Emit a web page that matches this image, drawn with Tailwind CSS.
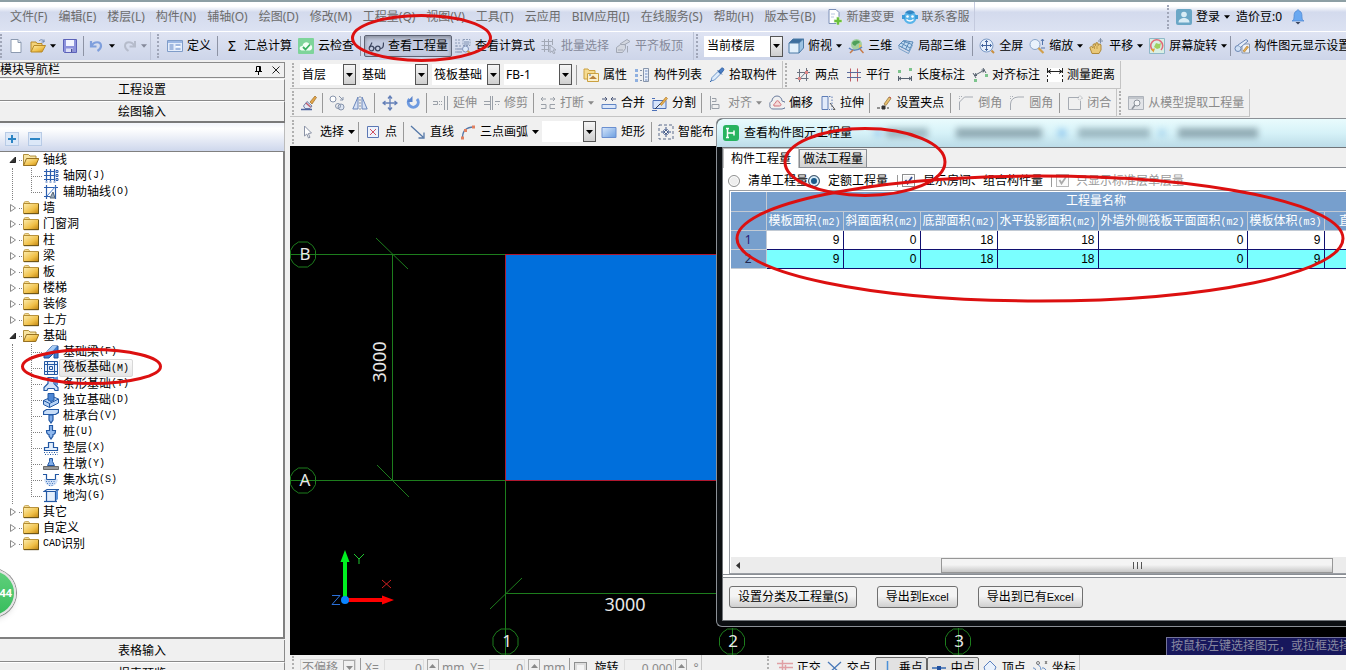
<!DOCTYPE html>
<html lang="zh-CN">
<head>
<meta charset="utf-8">
<title>查看构件图元工程量</title>
<script src="https://cdn.jsdelivr.net/npm/@tailwindcss/browser@4"></script>
</head>
<body class="relative flex h-screen flex-col overflow-hidden bg-[#f0f0f0] font-['Noto_Sans','Noto_Sans_CJK_SC',sans-serif] text-[12px] leading-4 whitespace-nowrap text-black">

<svg class="absolute size-0" aria-hidden="true">
  <defs>
    <linearGradient id="gold" x1="0" y1="0" x2="1" y2="1"><stop offset="0" stop-color="#fdeeb0"/><stop offset=".6" stop-color="#f0c048"/><stop offset="1" stop-color="#c08410"/></linearGradient>
    <linearGradient id="blu" x1="0" y1="0" x2="1" y2="1"><stop offset="0" stop-color="#d6e6fb"/><stop offset="1" stop-color="#6c9fe0"/></linearGradient>
  </defs>
  <symbol id="dn" viewBox="0 0 7 4"><path d="M0 0h7L3.500 4z" fill="currentColor"/></symbol>
  <symbol id="new" viewBox="0 0 16 16"><path d="M3 1.500h7l3 3v10H3z" fill="#fff" stroke="#8c9ab0"/><path d="M10 1.500v3h3" fill="#dfe6f0" stroke="#8c9ab0"/></symbol>
  <symbol id="open" viewBox="0 0 16 16"><path d="M1 14V4h5l1 1.500h5V8" fill="#f3d37a" stroke="#b88a28"/><path d="M1 14l3-6.500h11.500L12 14z" fill="url(#gold)" stroke="#b88a28"/><path d="M9 3c2-2 4-1.500 5 1m0-2.500V4h-2.500" fill="none" stroke="#6d86b0"/></symbol>
  <symbol id="save" viewBox="0 0 16 16"><path d="M1.500 1.500h13v13h-12l-1-1z" fill="#8d93dc" stroke="#5c62b8"/><path d="M4 2h8v6H4z" fill="#f2f4ff"/><path d="M4 10.500h7V14H4z" fill="#dcdff6"/><path d="M9 11h1.500v3H9z" fill="#4a4f9a"/></symbol>
  <symbol id="undo" viewBox="0 0 16 16"><path d="M2 3v5.500h5.500M2.500 8C5 3 12 3 12 8c0 2.500-2 4-3.500 5" fill="none" stroke="#7f9fdc" stroke-width="2.200"/></symbol>
  <symbol id="redo" viewBox="0 0 16 16"><path d="M14 3v5.500H8.500M13.500 8C11 3 4 3 4 8c0 2.500 2 4 3.500 5" fill="none" stroke="#b6bccb" stroke-width="2"/></symbol>
  <symbol id="define" viewBox="0 0 16 16"><path d="M.5 2.500h15v11H.5z" fill="#e4edfb" stroke="#7f9cc8"/><path d="M1 3h14v2H1z" fill="#9db8e4"/><path d="M2.500 7h4M2.500 9h4M2.500 11h4M8.500 7h5M8.500 11h5" stroke="#5f84c4"/><path d="M9 8.500h4" stroke="#fff"/></symbol>
  <symbol id="cloudchk" viewBox="0 0 16 16"><rect width="16" height="16" rx="1" fill="#7ed49a"/><path d="M3.500 12.500c-3-1-2-5 1-4.500C5 4 10 3 11.500 6.500c3.500 0 3.500 5.500.5 6z" fill="#f2fff5"/><path d="M5 9l2.500 2.500L12 6.500" fill="none" stroke="#38b060" stroke-width="1.800"/></symbol>
  <symbol id="glasses" viewBox="0 0 16 16"><g fill="none" stroke="#3d4660" stroke-width="1.200"><circle cx="3.500" cy="10.500" r="2.300"/><circle cx="9.800" cy="10.500" r="2.300"/><path d="M5.800 10h1.700M1.500 9.500L4 4.500M12 10.500c3 0 3.500-1.500 3.500-6"/></g></symbol>
  <symbol id="calcview" viewBox="0 0 16 16"><path d="M1 1v14M4 1v6M1 8h6M8 1.500h7v6H8z" stroke="#8d9cb8" stroke-dasharray="2 1" fill="#d9e2f3"/><path d="M9 4h5M9 6h5M2 11h5M2 14h5" stroke="#7b8cae"/><circle cx="10.500" cy="11" r="3" fill="#dbe8fa" stroke="#8092b8"/><path d="M12.500 13l3 2.500" stroke="#d89a3c" stroke-width="2"/></symbol>
  <symbol id="batch" viewBox="0 0 16 16"><path d="M.5 3.500h11M.5 7.500h9M.5 11.500h8M3.500 1v13M7.500 1v13M11.500 1v6M9 7l6 5h-3l2 3-1.500.7L11 13l-2 1.500z" fill="none" stroke="#a2a8b5"/></symbol>
  <symbol id="flush" viewBox="0 0 16 16"><path d="M1.500 14.500v-5l4-3h5v4l-3 4zM5 6l7-4.500 3 2L9 7" fill="#d3d7e0" stroke="#a2a8b5"/><path d="M3 12h5M12.500 8v6.500" stroke="#a2a8b5"/></symbol>
  <symbol id="cube" viewBox="0 0 16 16"><path d="M1 5l4-4h10.500L11 5z" fill="#3d6f9e"/><path d="M11 5l4.500-4v9L11 15z" fill="#9cc3e4"/><path d="M1 5h10v10H1z" fill="#e2f0fb"/><path d="M1 5h10v10H1zM1 5l4-4h10.500v9L11 15M11 5l4.500-4" fill="none" stroke="#4b7aa6"/></symbol>
  <symbol id="tri3" viewBox="0 0 16 16"><circle cx="8.500" cy="6.500" r="5.500" fill="#a4cfa0"/><path d="M4 5c2-3 6-3 8-1-1 2-3 1-4 3s-3 0-4-2z" fill="#4fa05a"/><path d="M11 6l3 2-3 3z" fill="#e5c050"/><path d="M1 10c3 3 9 3 13-1" stroke="#5d86c0" fill="none" stroke-width="1.500"/><path d="M12 11l3.500 4M2 15l3-3" stroke="#c87a48" stroke-width="1.500"/></symbol>
  <symbol id="loc3" viewBox="0 0 16 16"><path d="M.5 7.500l5-5 9.500 1.500-4 9z" fill="#c3dcf2" stroke="#5a89b8"/><path d="M3.500 9.500l4.500-7M7.500 11.500l4-8M3 5l9 5M5 3l9 3.500" stroke="#5a89b8" fill="none"/><path d="M1 8v2.500l9.500 5L14.500 7" fill="none" stroke="#7aa2c8"/></symbol>
  <symbol id="full" viewBox="0 0 16 16"><circle cx="7.500" cy="7.500" r="6.500" fill="#e6f0fc" stroke="#7d9bc6"/><path d="M7.500 2.500v10M2.500 7.500h10M6 4l1.500-1.500L9 4M6 11l1.500 1.500L9 11M4 6L2.500 7.500 4 9M11 6l1.500 1.500L11 9" fill="none" stroke="#40629c"/><path d="M12.500 12.500L15 15" stroke="#c98e3c" stroke-width="2"/></symbol>
  <symbol id="zoom" viewBox="0 0 16 16"><circle cx="6" cy="6.500" r="5" fill="#e9f2fc" stroke="#8aa6ca"/><path d="M9.500 10l5 5" stroke="#d2a04c" stroke-width="2.200"/><path d="M13.500 1v6M12 3l1.500-2L15 3M12 10h4" stroke="#5576ac" fill="none"/></symbol>
  <symbol id="hand" viewBox="0 0 16 16"><path d="M3 15.500L.8 9.500l1.700-1.200L4 10V6.500l1.800-.8.7 2 .5-3 2 .3.200 2.500 1-1.500 1.800.8V12L10 15.500z" fill="#e9c878" stroke="#b08a3a"/><path d="M5.500 8v3M8 8v3" stroke="#b08a3a" stroke-width=".7"/><path d="M11.500.500v5M9 3h5M10.500 1.500l1-1 1 1" stroke="#8090a8" fill="none"/></symbol>
  <symbol id="rot" viewBox="0 0 16 16"><path d="M.5.5h15v15H.5z" fill="#d9efe4" stroke="#8fb8c8"/><path d="M4 12.500A6 6 0 1 1 12 12" fill="none" stroke="#e06a78" stroke-width="1.600"/><path d="M5 9l2-4 3 1 2-1-1 5-3 1z" fill="#9ed060"/><path d="M2 11l4-.5-1.500 4z" fill="#e0a030"/></symbol>
  <symbol id="disp" viewBox="0 0 16 16"><path d="M8 6h7.500v9H8z" fill="#eef2f8" stroke="#8795ab"/><circle cx="4" cy="10.500" r="3" fill="#cfe0f5" stroke="#6b87b4"/><path d="M4 7l8-5.500 2 1.500-7 6" fill="#e6eef9" stroke="#6b87b4"/><path d="M9 13l4-5 1.500 1-4 5z" fill="#e8b050" stroke="#a87428" stroke-width=".6"/></symbol>
  <symbol id="prop" viewBox="0 0 16 16"><path d="M1 3.500V2h4l1 1.500h6V12H1z" fill="#f6dc92" stroke="#caa040"/><path d="M4.500 6.500h11v8h-11z" fill="#fbf0cd" stroke="#caa040"/><path d="M6 12l4-3.500 4 3.500z" fill="#b8823c"/><path d="M6 8h2" stroke="#5577b4"/></symbol>
  <symbol id="list" viewBox="0 0 16 16"><path d="M1 2h3v3H1zM1 7h3v3H1zM1 12h3v3H1z" fill="#8fb0e0"/><path d="M6 3.500h2M6 8.500h2M6 13.500h2" stroke="#8492a8"/><path d="M9.500 1.500h5v13h-5z" fill="#e9eff9" stroke="#8795ab"/><path d="M11 4h2.500M11 7h2.500M11 10h2.500M11 13h2.500" stroke="#6f8cc0"/></symbol>
  <symbol id="pick" viewBox="0 0 16 16"><path d="M2 14l1-3.500 6-6 2.500 2.500-6 6z" fill="#dcebfb" stroke="#6d95c8"/><path d="M8.500 3l4.500 4.500M9.500 4.500L12 1.500c2-1.500 3.500.5 2.500 2L12 6.500z" fill="#4a7ec4" stroke="#3565a8"/><path d="M1 15l1.500-1.500" stroke="#3565a8"/></symbol>
  <symbol id="twopt" viewBox="0 0 16 16"><path d="M4.500 2v13M.5 11.500h13M11.500 1v13M2 5.500h13" stroke="#6b7280" fill="none"/><path d="M3.500 13L13 3" stroke="#6b7280"/><path d="M3 10h3v3H3zM10 4h3v3h-3z" fill="#e08a8a"/></symbol>
  <symbol id="para" viewBox="0 0 16 16"><path d="M4.500 1.500v13M11.500 1.500v13" stroke="#c05a64"/><path d="M1 5.500h14M1 10.500h14" stroke="#5b6c9c"/></symbol>
  <symbol id="dimlen" viewBox="0 0 16 16"><path d="M1 3h3v3H1zM12 1h3v3h-3z" fill="#7cc48c"/><path d="M1.500 9v5M14.500 9v5M2 11.500h12M4 10l-2 1.500L4 13M12 10l2 1.500-2 1.500" stroke="#55606e" fill="none"/></symbol>
  <symbol id="dimali" viewBox="0 0 16 16"><path d="M2 12h3v3H2zM13 7h3v3h-3z" fill="#7cc48c"/><path d="M1 6l3 5M11 1l3 5M2.500 8.500L12.500 3M5 8.500H2.500L4 6M9.500 3h3L11 5.500" stroke="#55606e" fill="none"/></symbol>
  <symbol id="measure" viewBox="0 0 16 16"><path d="M0 1h16v14H0z" fill="#fff"/><path d="M.5 1v5M15.500 1v5M.5 8v2M15.500 8v2M.5 12v3M15.500 12v3M1 4.500h14M4 2.500l-3 2 3 2M12 2.500l3 2-3 2" stroke="#222" fill="none"/></symbol>
  <symbol id="brush" viewBox="0 0 16 16"><path d="M9 7l5-6 1.500 1.500L11 9z" fill="#e3a64a" stroke="#9c6b26" stroke-width=".7"/><path d="M6 6.500l5 4.500-2 2.500H4L2.500 11z" fill="#e4e8f4" stroke="#6e7fa8"/><path d="M5 8l4.500 4" stroke="#c06070" stroke-width="1.500"/><path d="M0 14.500h11" stroke="#4e64a0" stroke-width="1.500"/></symbol>
  <symbol id="copy" viewBox="0 0 16 16"><circle cx="4" cy="4" r="3" fill="#fff" stroke="#8794ab"/><circle cx="12" cy="12" r="3" fill="#dce4f2" stroke="#8794ab"/><circle cx="9" cy="11" r="2.500" fill="none" stroke="#8794ab"/><path d="M10 1l4 4m0-3v3h-3" stroke="#8794ab" fill="none"/></symbol>
  <symbol id="mirror" viewBox="0 0 16 16"><path d="M6 2v12H.8zM10 2v12h5.200z" fill="#d5e0f4" stroke="#6a86bb"/><path d="M8 1v14" stroke="#8794ab" stroke-dasharray="2 1"/></symbol>
  <symbol id="move" viewBox="0 0 16 16"><path d="M8 1v14M1 8h14M6 3.500L8 1l2 2.500M6 12.500L8 15l2-2.500M3.500 6L1 8l2.500 2M12.500 6L15 8l-2.500 2" fill="none" stroke="#6480b8" stroke-width="1.300"/></symbol>
  <symbol id="rotate" viewBox="0 0 16 16"><path d="M4.500 4A5 5 0 1 0 12 4" fill="none" stroke="#6f9be0" stroke-width="3"/><path d="M7.500 1v6H2z" fill="#5a84cc"/></symbol>
  <symbol id="extend" viewBox="0 0 16 16"><path d="M0 6.500h4.500v3H0" fill="none" stroke="#9aa0a8"/><path d="M6 6.500h1M8 6.500h1M6 9.500h1M8 9.500h1M11.500 1v14M14.500 1v14" stroke="#9aa0a8"/></symbol>
  <symbol id="trim" viewBox="0 0 16 16"><path d="M0 6.500h6M0 9.500h6M8.500 1v14M6.500 1v14M11 6.500h5M11 9.500h1M14 9.500h1" stroke="#9aa0a8" fill="none"/></symbol>
  <symbol id="break" viewBox="0 0 16 16"><path d="M1 9.500h5v4H1M15 9.500h-5v4h5M6 4H1m2-2L1 4l2 2M10 4h5m-2-2l2 2-2 2" stroke="#9aa0a8" fill="none"/></symbol>
  <symbol id="merge" viewBox="0 0 16 16"><path d="M1 4h5M4 2l2 2-2 2M15 4h-5m2-2l-2 2 2 2" stroke="#4d5a7c" fill="none"/><path d="M1 9.500h14v4H1z" fill="#dbe7fa" stroke="#5f84c4"/></symbol>
  <symbol id="split" viewBox="0 0 16 16"><path d="M1 5.500h13v8H1z" fill="#d6e4fa" stroke="#4c70b8"/><path d="M3 14L13 4" stroke="#333b50"/><path d="M8 9l6-7 1.500 1.500-6 7z" fill="#e8b050" stroke="#a87428" stroke-width=".6"/><path d="M0 3.500h3M0 15.500h5" stroke="#4c70b8"/></symbol>
  <symbol id="align" viewBox="0 0 16 16"><path d="M2.500 1v14M4 3.500h4v3H4M4 9.500h7v4H4z" fill="none" stroke="#9aa0a8"/></symbol>
  <symbol id="offset" viewBox="0 0 16 16"><path d="M1 10a3 3 0 0 1 2-4 5 5 0 0 1 10 0 3.500 3.500 0 0 1 0 8H4a3 3 0 0 1-3-4z" fill="none" stroke="#6c7d9e"/><path d="M5 11c-1-2 1-2.500 1.500-3 .5-3 3.500-3 4 0 2 .5 2 3 0 3z" fill="#f6dada" stroke="#d07078"/></symbol>
  <symbol id="stretch" viewBox="0 0 16 16"><path d="M2 1.500h6v13H2z" fill="#e2ebfa" stroke="#5e7db6"/><path d="M9 1.500h3v13H9" stroke="#5e7db6" fill="none" stroke-dasharray="1.500 1.500"/><path d="M10 8l5 6.500-2-.2" stroke="#555" fill="none"/></symbol>
  <symbol id="gripi" viewBox="0 0 16 16"><path d="M1 13h3M6 11h3v3H6zM11 13h2" stroke="#333" fill="#333"/><path d="M8 9l5-7 2 1.500-5 7z" fill="#e8c070" stroke="#8a6a30" stroke-width=".7"/><path d="M13.500 2l1.500 1" stroke="#c44"/></symbol>
  <symbol id="chamfer" viewBox="0 0 16 16"><path d="M1.500 15V7l5-5H15" fill="none" stroke="#a6abb3"/><path d="M1.500 4V1.500H4" fill="none" stroke="#a6abb3" stroke-dasharray="1 1"/></symbol>
  <symbol id="fillet" viewBox="0 0 16 16"><path d="M1.500 15V9Q2 2.500 9 2H15" fill="none" stroke="#a6abb3"/><path d="M1.500 4V1.500H4" fill="none" stroke="#a6abb3" stroke-dasharray="1 1"/></symbol>
  <symbol id="closei" viewBox="0 0 16 16"><path d="M12 2.500H1.500v12h12V6" fill="none" stroke="#a6abb3"/><circle cx="13" cy="3" r="2" fill="none" stroke="#a6abb3" stroke-dasharray="1 1"/></symbol>
  <symbol id="extract" viewBox="0 0 16 16"><path d="M.5 1.500h15v13H.5z" fill="#e2e4e8" stroke="#adb2ba"/><path d="M1 2h14v2H1z" fill="#c2c6cc"/><circle cx="9" cy="8" r="3" fill="#f4f5f7" stroke="#8d939c"/><path d="M7 10l-3 4" stroke="#8d939c" stroke-width="1.500"/></symbol>
  <symbol id="cursor" viewBox="0 0 16 16"><path d="M4.500 2v10l2.300-2 1.700 4 1.500-.7-1.700-3.800 3.200-.5z" fill="#fff" stroke="#8b93a6"/></symbol>
  <symbol id="pointi" viewBox="0 0 16 16"><path d="M2.500 2.500h11v11h-11z" fill="#eef3fc" stroke="#5c78b4"/><path d="M5 5l6 6M11 5l-6 6" stroke="#d05060"/></symbol>
  <symbol id="linei" viewBox="0 0 16 16"><path d="M1 2l12 11M14 8.500V14H8.500" stroke="#5578a8" fill="none" stroke-width="1.300"/></symbol>
  <symbol id="arci" viewBox="0 0 16 16"><path d="M2.500 14C2.500 7 6 3 14 3" stroke="#5578a8" fill="none" stroke-width="1.300"/><path d="M1 12.500h3v3H1zM4 5h3v3H4zM12 1.500h3v3h-3z" fill="#e08060"/></symbol>
  <symbol id="recti" viewBox="0 0 16 16"><path d="M1 3.500h14v10H1z" fill="url(#blu)" stroke="#6a8fd0"/></symbol>
  <symbol id="smart" viewBox="0 0 16 16"><path d="M1 1h14v14H1z" fill="none" stroke="#5d6c8c" stroke-dasharray="3 2"/><path d="M8 3v4M8 9v4M3 8h4M9 8h4M6.500 5L8 7l1.500-2M6.500 11L8 9l1.500 2M5 6.500L7 8 5 9.500M11 6.500L9 8l2 1.500" fill="none" stroke="#3e5688"/></symbol>
  <symbol id="ortho" viewBox="0 0 16 16"><path d="M0 3.500h16M5.500 0v11M8.500 5v11M2 7.500h14" stroke="#e0a0a4" stroke-width="1.500"/></symbol>
  <symbol id="cross" viewBox="0 0 16 16"><path d="M1 2l13 12M14 2L1 14" stroke="#4878b8" stroke-width="1.300"/></symbol>
  <symbol id="perp" viewBox="0 0 16 16"><path d="M8.500 1v12M2 13.500h13" stroke="#4a90d8" stroke-width="1.500"/></symbol>
  <symbol id="mid" viewBox="0 0 16 16"><path d="M1 8h14" stroke="#3468b0" stroke-width="1.500"/><path d="M6 6h4v4H6z" fill="#2050a0"/></symbol>
  <symbol id="vertex" viewBox="0 0 16 16"><path d="M8 1l6 6-3 7H4L2 7z" fill="#e9f1fc" stroke="#5a80c0"/></symbol>
  <symbol id="coord" viewBox="0 0 16 16"><path d="M1 8q3-1 3 6M5 4q5 2 4 10M10 8q4-1 5 6" stroke="#6890c8" fill="none"/><circle cx="6" cy="3" r="1.500" fill="none" stroke="#777"/><path d="M13 1l2 3m0-3l-2 3" stroke="#777"/></symbol>
  <symbol id="user" viewBox="0 0 16 16"><rect width="16" height="16" rx="2" fill="#6ba7c6"/><circle cx="8" cy="5.500" r="2.800" fill="#d9ecf5"/><path d="M2.500 13.500c0-6 11-6 11 0z" fill="#d9ecf5"/></symbol>
  <symbol id="bell" viewBox="0 0 16 16"><path d="M8 .5l1 1.300c2.500.6 3 3 3 5.700s.5 3.500 2 4.500H2c1.500-1 2-1.800 2-4.500s.5-5.100 3-5.700z" fill="#6aa8f0" stroke="#4a84d0" stroke-width=".7"/><path d="M5.500 13h5L8 15.500z" fill="#3a4660"/></symbol>
  <symbol id="newdoc" viewBox="0 0 16 16"><path d="M2 .5h7l3 3v11H2z" fill="#fff" stroke="#7c90b8"/><path d="M4 5h4M4 8h3" stroke="#b8c6e0"/><path d="M9.500 8h3v2.500H15v3h-2.500V16h-3v-2.500H7v-3h2.500z" fill="#6cc03c" stroke="#e8f6e0" stroke-width=".6"/></symbol>
  <symbol id="robot" viewBox="0 0 16 16"><circle cx="8" cy="8.500" r="6.500" fill="#58b4ea"/><path d="M0 6h3v4H0zM13 6h3v4h-3z" fill="#3b9ad8"/><path d="M3 3.500Q8-1 13 3.500L8 5.500z" fill="#3286c4"/><circle cx="5.500" cy="7.500" r="1.300" fill="#fff"/><circle cx="10.500" cy="7.500" r="1.300" fill="#fff"/><path d="M4.500 10.500q3.500 3 7 0" stroke="#fff" fill="none" stroke-width="1.300"/></symbol>
  <symbol id="logo" viewBox="0 0 16 16"><rect width="16" height="16" rx="3" fill="#27b45f"/><path d="M4.500 3v10M4.500 8H11M3 3.500h3M3 12.500h3M11 5.500v5" stroke="#fff" stroke-width="1.500" fill="none"/></symbol>
  <symbol id="fold" viewBox="0 0 16 16"><path d="M1 3q0-1.500 1.500-1.500h3L7 3.500H1z" fill="#f4dc94" stroke="#b89238" stroke-width=".7"/><path d="M.5 3.500h15v10H.5z" fill="url(#gold)" stroke="#a87c1c" stroke-width=".8"/><path d="M1 13.700h14.700V4" stroke="#4a3808" fill="none" stroke-width=".8"/></symbol>
  <symbol id="foldo" viewBox="0 0 16 16"><path d="M.5 13.500v-11h5L7 4h6v3" fill="#f7e4a2" stroke="#a8842c" stroke-width=".9"/><path d="M.5 13.500l3-7h12.300l-3 7z" fill="url(#gold)" stroke="#8c6414" stroke-width=".9"/></symbol>
  <symbol id="exc" viewBox="0 0 8 8"><path d="M1.500.5l5 3.500-5 3.500z" fill="#fff" stroke="#8a8a8a"/></symbol>
  <symbol id="exo" viewBox="0 0 8 8"><path d="M6.500 1v5.500H1z" fill="#333" stroke="#222"/></symbol>
  <symbol id="tee" viewBox="0 0 12 16"><path d="M.5 0v16M2 8.500h10" stroke="#808080" stroke-dasharray="1 1"/></symbol>
  <symbol id="elb" viewBox="0 0 12 16"><path d="M.5 0v9M2 8.500h10" stroke="#808080" stroke-dasharray="1 1"/></symbol>
  <symbol id="axnet" viewBox="0 0 16 16"><path d="M1 3.500h11M1 7.500h11M1 11.500h11M3.500 1v12M7.500 1v12M11.500 1v12" stroke="#2c5eae" stroke-width="1.200"/><path d="M13 2.500h2v2h-2zM13 6.500h2v2h-2zM13 10.500h2v2h-2zM2.500 14h2M6.500 14h2M10.500 14h2" stroke="#2c5eae" fill="#fff"/></symbol>
  <symbol id="axaux" viewBox="0 0 16 16"><path d="M1 3.500h14M1 12.500h6M3.500 1v14M12.500 1v14" stroke="#2c5eae" stroke-width="1.200"/><path d="M4 12l9-10" stroke="#4d83d0"/><path d="M7 14l3-6 2 6z" fill="#9ab" stroke="#567"/></symbol>
  <symbol id="jcl" viewBox="0 0 16 16"><path d="M1 11l8-9h6v12h-4V9L6 14H1z" fill="#3f7fd0" stroke="#1f4f98"/><path d="M1 11l8-9h5L7 10z" fill="#a8ccf4"/></symbol>
  <symbol id="raft" viewBox="0 0 16 16"><path d="M1.500 1.500h13v13h-13z" fill="#e8f1fd"/><path d="M1.500 1.500h13v13h-13zM4.500 1.500v13M11.500 1.500v13M1.500 4.500h13M1.500 11.500h13M6.500 6.500h3v3h-3z" fill="none" stroke="#2358a4"/></symbol>
  <symbol id="strip" viewBox="0 0 16 16"><path d="M5 1.500h6v6l4 4v3h-3l-1-2H5l-1 2H1v-3l4-4z" fill="#d2e3f9" stroke="#2358a4" stroke-width="1.200"/><path d="M11 1.500l4-1v9l-4-2z" fill="#5a92da"/></symbol>
  <symbol id="indep" viewBox="0 0 16 16"><path d="M.5 8.500l9-4 6 2.500v4l-9 4.500-6-3z" fill="#b7d3f5" stroke="#2358a4"/><path d="M6.500 15.500v-4l9-4.500M.5 8.500l6 3" fill="none" stroke="#2358a4"/><path d="M5 1.500h6V8L8 9.500 5 8z" fill="#4c86d4" stroke="#2358a4"/></symbol>
  <symbol id="cap" viewBox="0 0 16 16"><path d="M.5 3.500l3-2h12v3l-3 2H.5z" fill="#c9def8" stroke="#2358a4" stroke-width="1.200"/><path d="M6 7h4v5l-2 3-2-3z" fill="#7fadea" stroke="#2358a4" stroke-width="1.200"/></symbol>
  <symbol id="pile" viewBox="0 0 16 16"><path d="M6.500 1.500h3v5h3q0 4-2.500 4v1.500l-2 3-2-3v-1.500q-2.500 0-2.500-4h3z" fill="#8fb8ee" stroke="#2358a4" stroke-width="1.200"/></symbol>
  <symbol id="cushion" viewBox="0 0 16 16"><path d="M5.500 2.500h5v5h4v3h-13v-3h4z" fill="#e2eefc" stroke="#2358a4" stroke-width="1.200"/><path d="M1 12.500h14M2 14.500h13" stroke="#2358a4" stroke-dasharray="1 1.500"/></symbol>
  <symbol id="pier" viewBox="0 0 16 16"><path d="M6.500 2.500h3v3l2 4h-7l2-4z" fill="#7fadea" stroke="#2358a4"/><path d="M.5 10.500h15v3H.5z" fill="#9a9a9a" stroke="#6a6a6a"/></symbol>
  <symbol id="sump" viewBox="0 0 16 16"><path d="M0 2.500h3.500v5h9v-5H16" fill="none" stroke="#2358a4" stroke-width="1.200"/><path d="M1 7h14q-1 7-7 7.500Q2 14 1 7z" fill="#cfe0f6"/><path d="M3.500 2.500v5h9v-5" fill="none" stroke="#2358a4"/><path d="M3 9.500h10M4 11.500h8M6 13.500h4" stroke="#4c7cc4" stroke-dasharray="1 1.500"/></symbol>
  <symbol id="trench" viewBox="0 0 16 16"><path d="M1 3.500l3-2h11.500l-3 2zM3.500 3.500h9v10h-9z" fill="#e4effc" stroke="#2358a4" stroke-width="1.200"/><path d="M1 13.500h13" stroke="#2358a4" stroke-width="1.200"/><path d="M13 4l2-2v9l-2 2z" fill="#5a92da"/></symbol>
</svg>

<!-- Menu bar -->
<header class="flex h-[31px] shrink-0 items-stretch border-t-2 border-[#8d9fa4] bg-linear-to-b from-white from-15% via-[#d3daed] via-35% to-[#dce2f2] text-[#6c6c6c]">
  <nav class="flex items-center gap-[11px] border-r border-[#c4cade] pr-1 pl-[10px]">
    <a href="#">文件(F)</a><a href="#">编辑(E)</a><a href="#">楼层(L)</a><a href="#">构件(N)</a><a href="#">辅轴(O)</a><a href="#">绘图(D)</a><a href="#">修改(M)</a><a href="#">工程量(Q)</a><a href="#">视图(V)</a><a href="#">工具(T)</a><a href="#">云应用</a><a href="#">BIM应用(I)</a><a href="#">在线服务(S)</a><a href="#">帮助(H)</a><a href="#">版本号(B)</a>
    <a href="#" class="flex items-center gap-1"><svg class="size-4"><use href="#newdoc"/></svg>新建变更</a>
    <a href="#" class="-ml-1 flex items-center gap-1"><svg class="size-4"><use href="#robot"/></svg>联系客服</a>
  </nav>
  <div class="ml-auto flex w-[179px] items-center text-black">
    <span class="mr-[7px] h-6 border-l-2 border-dotted border-[#a0a6b8]"></span>
    <button class="flex items-center gap-1"><svg class="size-4"><use href="#user"/></svg>登录<svg class="h-1 w-[6px]"><use href="#dn"/></svg></button>
    <span class="ml-1.5">造价豆:0</span>
    <button aria-label="通知" class="ml-2"><svg class="size-4"><use href="#bell"/></svg></button>
  </div>
</header>

<!-- Main toolbar -->
<div class="flex h-[29px] shrink-0 items-stretch border-t border-white bg-linear-to-b from-[#dfe4f3] to-[#cdd5e9] [&_button]:flex [&_button]:items-center [&_button]:gap-1 [&_button]:px-[3px]">
  <div class="flex items-center border-r border-[#bcc3d6]">
    <span class="mr-[3px] h-6 border-l-2 border-dotted border-[#a0a6b8]"></span>
    <button aria-label="新建"><svg class="size-4"><use href="#new"/></svg></button>
    <button aria-label="打开"><svg class="size-4"><use href="#open"/></svg><svg class="h-1 w-[6px]"><use href="#dn"/></svg></button>
    <button aria-label="保存"><svg class="size-4"><use href="#save"/></svg></button>
    <span class="mx-[2px] h-5 w-px bg-[#8d93a4]"></span>
    <button aria-label="撤销"><svg class="size-4"><use href="#undo"/></svg><svg class="h-1 w-[6px]"><use href="#dn"/></svg></button>
    <button aria-label="恢复" class="text-[#85899a]"><svg class="size-4"><use href="#redo"/></svg><svg class="h-1 w-[6px]"><use href="#dn"/></svg></button>
  </div>
  <div class="ml-[6px] flex items-center border-r border-[#bcc3d6] pr-[7px]">
    <span class="mr-[5px] h-6 border-l-2 border-dotted border-[#a0a6b8]"></span>
    <button><svg class="size-4"><use href="#define"/></svg>定义</button>
    <span class="mx-[3px] h-5 w-px bg-[#8d93a4]"></span>
    <button><span class="w-4 text-center text-[14px]">Σ</span>汇总计算</button>
    <button><svg class="size-4"><use href="#cloudchk"/></svg>云检查</button>
    <span class="mx-[3px] h-5 w-px bg-[#8d93a4]"></span>
    <button class="h-[22px] rounded-xs border border-[#5d6374] bg-[#c3cbe0] inset-shadow-sm inset-shadow-black/30"><svg class="size-4"><use href="#glasses"/></svg>查看工程量</button>
    <button><svg class="size-4"><use href="#calcview"/></svg>查看计算式</button>
    <button class="text-[#85899a]"><svg class="size-4"><use href="#batch"/></svg>批量选择</button>
    <button class="text-[#85899a]"><svg class="size-4"><use href="#flush"/></svg>平齐板顶</button>
  </div>
  <div class="ml-[2px] flex items-center">
    <span class="mr-[6px] h-6 border-l-2 border-dotted border-[#a0a6b8]"></span>
    <span class="mr-[2px] flex h-[21px] w-[79px] bg-white"><select aria-label="楼层范围" class="min-w-0 flex-1 appearance-none pl-[3px]"><option>当前楼层</option></select><span class="flex w-[13px] items-center justify-center border border-[#555] bg-linear-to-b from-[#f6f6f6] to-[#cfcfcf]"><svg class="h-1 w-[7px]"><use href="#dn"/></svg></span></span>
    <button><svg class="size-4"><use href="#cube"/></svg>俯视<svg class="h-1 w-[6px]"><use href="#dn"/></svg></button>
    <button><svg class="size-4"><use href="#tri3"/></svg>三维</button>
    <button><svg class="size-4"><use href="#loc3"/></svg>局部三维</button>
    <span class="mx-[3px] h-5 w-px bg-[#8d93a4]"></span>
    <button><svg class="size-4"><use href="#full"/></svg>全屏</button>
    <button><svg class="size-4"><use href="#zoom"/></svg>缩放<svg class="h-1 w-[6px]"><use href="#dn"/></svg></button>
    <button><svg class="size-4"><use href="#hand"/></svg>平移<svg class="h-1 w-[6px]"><use href="#dn"/></svg></button>
    <button><svg class="size-4"><use href="#rot"/></svg>屏幕旋转<svg class="h-1 w-[6px]"><use href="#dn"/></svg></button>
    <span class="h-5 w-px bg-[#8d93a4]"></span>
    <button><svg class="size-4"><use href="#disp"/></svg>构件图元显示设置</button>
  </div>
</div>

<div class="flex min-h-0 flex-1">
  <!-- Module navigation panel -->
  <aside class="flex w-[285px] shrink-0 flex-col overflow-hidden pt-[2px]">
    <div class="flex h-4 shrink-0 items-center border border-l-0 border-[#8a8a8a] pr-1">
      <span class="flex-1">模块导航栏</span>
      <button aria-label="固定" class="mr-[10px]"><svg class="h-[9px] w-[7px]"><path d="M1.500.5h4v5h-4zM0 5.500h7M3.500 6v3M4.500 1v4" stroke="#000" fill="none"/></svg></button>
      <button aria-label="关闭"><svg class="size-2"><path d="M.5.5l7 7M7.500.5l-7 7" stroke="#222"/></svg></button>
    </div>
    <button class="mt-px h-[22px] shrink-0 border-r border-b border-[#8a8a8a] border-t border-t-white">工程设置</button>
    <button class="h-[22px] shrink-0 border-r border-b-2 border-[#7a7a7a] border-t border-t-white">绘图输入</button>
    <div class="flex h-[28px] shrink-0 items-end gap-[9px] border-r border-[#bbb] bg-linear-to-b from-[#f4f6fb] from-5% via-white via-20% to-[#ced7ec] pb-[5px] pl-[5px]">
      <button aria-label="展开" class="size-[14px] border border-[#b8cbe6] bg-[#dce8f8]"><svg class="size-3"><path d="M6 2v8M2 6h8" stroke="#2b84c4" stroke-width="2"/></svg></button>
      <button aria-label="折叠" class="size-[14px] border border-[#b8cbe6] bg-[#dce8f8]"><svg class="size-3"><path d="M1 6h10" stroke="#2b84c4" stroke-width="2"/></svg></button>
    </div>
    <div class="relative min-h-0 flex-1 border-t border-r-2 border-b-2 border-[#808080] bg-white">
      <ul class="[&_b]:mr-px [&_b]:w-[3px] [&_b]:border-t [&_b]:border-dotted [&_b]:border-[#808080] [&_i]:font-['Liberation_Mono',monospace] [&_i]:text-[10px] [&_i]:not-italic [&_li>div]:flex [&_li>div]:h-4 [&_li>div]:items-center [&>li>div]:pl-[9px] [&_ul]:ml-3 [&_ul]:border-l [&_ul]:border-dotted [&_ul]:border-[#808080] [&_ul]:pl-[18px]">
        <li><div><svg class="mr-0.5 size-2"><use href="#exo"/></svg><b></b><svg class="mr-1 size-4"><use href="#foldo"/></svg>轴线</div>
          <ul>
            <li><div><svg class="h-4 w-3"><use href="#tee"/></svg><svg class="mr-1 size-4"><use href="#axnet"/></svg>轴网<i>(J)</i></div></li>
            <li><div><svg class="h-4 w-3"><use href="#elb"/></svg><svg class="mr-1 size-4"><use href="#axaux"/></svg>辅助轴线<i>(O)</i></div></li>
          </ul>
        </li>
        <li><div><svg class="mr-0.5 size-2"><use href="#exc"/></svg><b></b><svg class="mr-1 size-4"><use href="#fold"/></svg>墙</div></li>
        <li><div><svg class="mr-0.5 size-2"><use href="#exc"/></svg><b></b><svg class="mr-1 size-4"><use href="#fold"/></svg>门窗洞</div></li>
        <li><div><svg class="mr-0.5 size-2"><use href="#exc"/></svg><b></b><svg class="mr-1 size-4"><use href="#fold"/></svg>柱</div></li>
        <li><div><svg class="mr-0.5 size-2"><use href="#exc"/></svg><b></b><svg class="mr-1 size-4"><use href="#fold"/></svg>梁</div></li>
        <li><div><svg class="mr-0.5 size-2"><use href="#exc"/></svg><b></b><svg class="mr-1 size-4"><use href="#fold"/></svg>板</div></li>
        <li><div><svg class="mr-0.5 size-2"><use href="#exc"/></svg><b></b><svg class="mr-1 size-4"><use href="#fold"/></svg>楼梯</div></li>
        <li><div><svg class="mr-0.5 size-2"><use href="#exc"/></svg><b></b><svg class="mr-1 size-4"><use href="#fold"/></svg>装修</div></li>
        <li><div><svg class="mr-0.5 size-2"><use href="#exc"/></svg><b></b><svg class="mr-1 size-4"><use href="#fold"/></svg>土方</div></li>
        <li><div><svg class="mr-0.5 size-2"><use href="#exo"/></svg><b></b><svg class="mr-1 size-4"><use href="#foldo"/></svg>基础</div>
          <ul>
            <li><div><svg class="h-4 w-3"><use href="#tee"/></svg><svg class="mr-1 size-4"><use href="#jcl"/></svg>基础梁<i>(F)</i></div></li>
            <li><div><svg class="h-4 w-3"><use href="#tee"/></svg><svg class="size-4"><use href="#raft"/></svg><span class="rounded-xs border border-[#d8d8d8] bg-linear-to-b from-[#fafafa] to-[#e6e6e6] px-[3px] leading-[14px]">筏板基础<i>(M)</i></span></div></li>
            <li><div><svg class="h-4 w-3"><use href="#tee"/></svg><svg class="mr-1 size-4"><use href="#strip"/></svg>条形基础<i>(T)</i></div></li>
            <li><div><svg class="h-4 w-3"><use href="#tee"/></svg><svg class="mr-1 size-4"><use href="#indep"/></svg>独立基础<i>(D)</i></div></li>
            <li><div><svg class="h-4 w-3"><use href="#tee"/></svg><svg class="mr-1 size-4"><use href="#cap"/></svg>桩承台<i>(V)</i></div></li>
            <li><div><svg class="h-4 w-3"><use href="#tee"/></svg><svg class="mr-1 size-4"><use href="#pile"/></svg>桩<i>(U)</i></div></li>
            <li><div><svg class="h-4 w-3"><use href="#tee"/></svg><svg class="mr-1 size-4"><use href="#cushion"/></svg>垫层<i>(X)</i></div></li>
            <li><div><svg class="h-4 w-3"><use href="#tee"/></svg><svg class="mr-1 size-4"><use href="#pier"/></svg>柱墩<i>(Y)</i></div></li>
            <li><div><svg class="h-4 w-3"><use href="#tee"/></svg><svg class="mr-1 size-4"><use href="#sump"/></svg>集水坑<i>(S)</i></div></li>
            <li><div><svg class="h-4 w-3"><use href="#elb"/></svg><svg class="mr-1 size-4"><use href="#trench"/></svg>地沟<i>(G)</i></div></li>
          </ul>
        </li>
        <li><div><svg class="mr-0.5 size-2"><use href="#exc"/></svg><b></b><svg class="mr-1 size-4"><use href="#fold"/></svg>其它</div></li>
        <li><div><svg class="mr-0.5 size-2"><use href="#exc"/></svg><b></b><svg class="mr-1 size-4"><use href="#fold"/></svg>自定义</div></li>
        <li><div><svg class="mr-0.5 size-2"><use href="#exc"/></svg><b></b><svg class="mr-1 size-4"><use href="#fold"/></svg><i>CAD</i>识别</div></li>
      </ul>
      <!-- Floating speed badge -->
      <div class="absolute bottom-[20px] -left-[32px] flex size-12 items-center justify-end rounded-full border-2 border-[#e4e4e4] bg-linear-to-b from-[#5fd07c] to-[#35bd5c] pr-[2px] text-[11px] font-bold text-white shadow-md ring-1 ring-[#8a8a8a]">44</div>
    </div>
    <button class="mt-px h-[22px] shrink-0 border-r border-b border-[#8a8a8a]">表格输入</button>
    <button class="-mb-[14px] h-[22px] shrink-0 border-r border-[#8a8a8a] border-t border-t-white">报表预览</button>
  </aside>

  <div class="ml-[5px] flex min-w-0 flex-1 flex-col">
    <!-- Component toolbar -->
    <div class="flex h-[29px] shrink-0 pt-px [&_button]:flex [&_button]:items-center [&_button]:gap-1 [&_button]:pr-[3px] [&_button]:pl-1">
      <div class="flex items-center border-r border-b border-[#c4c4c4] pr-[2px]">
        <span class="ml-[2px] mr-[6px] h-6 border-l-2 border-dotted border-[#b0b0b0]"></span>
        <span class="mr-1 flex h-[21px] w-14 bg-white"><select aria-label="楼层" class="min-w-0 flex-1 appearance-none pl-[2px]"><option>首层</option></select><span class="flex w-[13px] items-center justify-center border border-[#555] bg-linear-to-b from-[#f6f6f6] to-[#cfcfcf]"><svg class="h-1 w-[7px]"><use href="#dn"/></svg></span></span>
        <span class="mr-1 flex h-[21px] w-[68px] bg-white"><select aria-label="构件类别" class="min-w-0 flex-1 appearance-none pl-[2px]"><option>基础</option></select><span class="flex w-[13px] items-center justify-center border border-[#555] bg-linear-to-b from-[#f6f6f6] to-[#cfcfcf]"><svg class="h-1 w-[7px]"><use href="#dn"/></svg></span></span>
        <span class="mr-1 flex h-[21px] w-[68px] bg-white"><select aria-label="构件类型" class="min-w-0 flex-1 appearance-none pl-[2px]"><option>筏板基础</option></select><span class="flex w-[13px] items-center justify-center border border-[#555] bg-linear-to-b from-[#f6f6f6] to-[#cfcfcf]"><svg class="h-1 w-[7px]"><use href="#dn"/></svg></span></span>
        <span class="mr-1 flex h-[21px] w-[68px] bg-white"><select aria-label="构件名称" class="min-w-0 flex-1 appearance-none pl-[2px]"><option>FB-1</option></select><span class="flex w-[13px] items-center justify-center border border-[#555] bg-linear-to-b from-[#f6f6f6] to-[#cfcfcf]"><svg class="h-1 w-[7px]"><use href="#dn"/></svg></span></span>
        <span class="mr-[2px] h-5 w-px bg-[#999]"></span>
        <button><svg class="size-4"><use href="#prop"/></svg>属性</button>
        <button><svg class="size-4"><use href="#list"/></svg>构件列表</button>
        <button><svg class="size-4"><use href="#pick"/></svg>拾取构件</button>
      </div>
      <div class="flex items-center border-r border-b border-[#c4c4c4] pr-[2px]">
        <span class="ml-[2px] mr-[4px] h-6 border-l-2 border-dotted border-[#b0b0b0]"></span>
        <button><svg class="size-4"><use href="#twopt"/></svg>两点</button>
        <button><svg class="size-4"><use href="#para"/></svg>平行</button>
        <button><svg class="size-4"><use href="#dimlen"/></svg>长度标注</button>
        <button><svg class="size-4"><use href="#dimali"/></svg>对齐标注</button>
        <button><svg class="size-4"><use href="#measure"/></svg>测量距离</button>
      </div>
    </div>
    <!-- Edit toolbar -->
    <div class="flex h-7 shrink-0 [&_button]:flex [&_button]:items-center [&_button]:gap-1 [&_button]:pr-[3px] [&_button]:pl-1">
      <div class="flex items-center border-r border-b border-[#c4c4c4] pr-[2px]">
        <span class="ml-[2px] mr-[3px] h-6 border-l-2 border-dotted border-[#b0b0b0]"></span>
        <button aria-label="删除"><svg class="size-4"><use href="#brush"/></svg></button>
        <span class="mx-[2px] h-5 w-px bg-[#999]"></span>
        <button aria-label="复制"><svg class="size-4"><use href="#copy"/></svg></button>
        <button aria-label="镜像"><svg class="size-4"><use href="#mirror"/></svg></button>
        <span class="mx-[3px] h-5 w-px bg-[#999]"></span>
        <button aria-label="移动"><svg class="size-4"><use href="#move"/></svg></button>
        <button aria-label="旋转"><svg class="size-4"><use href="#rotate"/></svg></button>
        <span class="mx-[2px] h-5 w-px bg-[#999]"></span>
        <button class="text-[#8a8a8a]"><svg class="size-4"><use href="#extend"/></svg>延伸</button>
        <button class="text-[#8a8a8a]"><svg class="size-4"><use href="#trim"/></svg>修剪</button>
        <span class="mx-[2px] h-5 w-px bg-[#999]"></span>
        <button class="text-[#8a8a8a]"><svg class="size-4"><use href="#break"/></svg>打断<svg class="h-1 w-[6px]"><use href="#dn"/></svg></button>
        <button><svg class="size-4"><use href="#merge"/></svg>合并</button>
        <button><svg class="size-4"><use href="#split"/></svg>分割</button>
        <span class="mx-[2px] h-5 w-px bg-[#999]"></span>
        <button class="text-[#8a8a8a]"><svg class="size-4"><use href="#align"/></svg>对齐<svg class="h-1 w-[6px]"><use href="#dn"/></svg></button>
        <button><svg class="size-4"><use href="#offset"/></svg>偏移</button>
        <button><svg class="size-4"><use href="#stretch"/></svg>拉伸</button>
        <span class="mx-[2px] h-5 w-px bg-[#999]"></span>
        <button><svg class="size-4"><use href="#gripi"/></svg>设置夹点</button>
        <span class="mx-[3px] h-5 w-px bg-[#999]"></span>
        <button class="text-[#8a8a8a]"><svg class="size-4"><use href="#chamfer"/></svg>倒角</button>
        <button class="text-[#8a8a8a]"><svg class="size-4"><use href="#fillet"/></svg>圆角</button>
        <span class="mx-[3px] h-5 w-px bg-[#999]"></span>
        <button class="text-[#8a8a8a]"><svg class="size-4"><use href="#closei"/></svg>闭合</button>
      </div>
      <div class="flex items-center border-r border-b border-[#c4c4c4] pr-[2px]">
        <span class="ml-[2px] mr-[3px] h-6 border-l-2 border-dotted border-[#b0b0b0]"></span>
        <button class="text-[#8a8a8a]"><svg class="size-4"><use href="#extract"/></svg>从模型提取工程量</button>
      </div>
    </div>
    <!-- Drawing toolbar -->
    <div class="flex h-[29px] shrink-0 items-center [&_button]:flex [&_button]:items-center [&_button]:gap-1 [&_button]:px-[3px]">
      <span class="ml-[2px] mr-[3px] h-6 border-l-2 border-dotted border-[#b0b0b0]"></span>
      <button><svg class="size-4"><use href="#cursor"/></svg>选择<svg class="h-1 w-[7px]"><use href="#dn"/></svg></button>
      <span class="mr-[3px] h-5 w-px bg-[#999]"></span>
      <button><svg class="size-4"><use href="#pointi"/></svg>点</button>
      <span class="mx-[3px] h-5 w-px bg-[#999]"></span>
      <button><svg class="size-4"><use href="#linei"/></svg>直线</button>
      <button><svg class="size-4"><use href="#arci"/></svg>三点画弧<svg class="h-1 w-[7px]"><use href="#dn"/></svg></button>
      <span class="mr-[2px] flex h-[21px] w-[54px] bg-white"><select aria-label="绘图参数" class="min-w-0 flex-1 appearance-none"><option></option></select><span class="flex w-[13px] items-center justify-center border border-[#555] bg-linear-to-b from-[#f6f6f6] to-[#cfcfcf]"><svg class="h-1 w-[7px]"><use href="#dn"/></svg></span></span>
      <button><svg class="size-4"><use href="#recti"/></svg>矩形</button>
      <span class="mx-[3px] h-5 w-px bg-[#999]"></span>
      <button><svg class="size-4"><use href="#smart"/></svg>智能布</button>
    </div>

    <!-- Drawing canvas -->
    <main class="relative min-h-0 flex-1 overflow-hidden bg-black">
      <svg class="absolute inset-0 size-full font-['Noto_Sans',sans-serif] text-[17px]" aria-label="绘图区">
        <g transform="translate(-290 -146)">
          <rect x="505.500" y="254.500" width="500" height="226" fill="#006fdc" stroke="#b01830"/>
          <g stroke="#1d7d1d" fill="none">
            <path d="M290 254.500h215M290 480.500h215M392.500 254v226M376 238l32 31M377 465l32 32M505.500 481v174M505 593.500h240M490 609l32-31M732.500 628v27M958.500 628v27"/>
            <g id="bub"><path d="M298.500 242h9l5 3.500 3 5v8l-3 5-5 3.500h-9l-5-3.500-3-5v-8l3-5z"/></g>
            <use href="#bub" y="226"/><use href="#bub" x="202.500" y="387"/><use href="#bub" x="429" y="387"/><use href="#bub" x="655" y="387"/>
          </g>
          <g fill="#e8e8e8" text-anchor="middle">
            <text x="305" y="260">B</text><text x="305" y="486">A</text><text x="507" y="647">1</text><text x="733" y="647">2</text><text x="959" y="647">3</text>
            <text x="625" y="611" class="text-[18px]">3000</text><text transform="translate(386 362) rotate(-90)" class="text-[18px]">3000</text>
          </g>
          <path d="M345 598v-38" stroke="#00f020" stroke-width="4"/><path d="M345 550l4.500 12h-9z" fill="#00f020"/>
          <path d="M347 600h28" stroke="#f00" stroke-width="4"/><path d="M394 600l-12 4.500v-2.500h-8v-4h8v-2.500z" fill="#f00"/>
          <circle cx="345" cy="600" r="4" fill="#0a84ff"/>
          <path d="M354 554l5 5 5-5M359 559v5" stroke="#20c830" fill="none"/><path d="M382 580l9 8M391 580l-9 8" stroke="#d02020"/><path d="M332 595.500h8l-8 9h8" stroke="#2a70d8" fill="none"/>
        </g>
      </svg>
      <div class="absolute right-0 bottom-0 h-[18px] w-[180px] overflow-hidden border border-r-0 border-b-0 border-[#74749a] bg-[#17175c] pl-1 text-[#8888a0]">按鼠标左键选择图元，或拉框选择</div>
    </main>

    <!-- Snap / offset bar -->
    <footer class="h-[15px] shrink-0 overflow-hidden">
      <div class="flex h-[26px] items-center text-[#8a8a8a]">
        <div class="flex h-full items-center border-r border-[#c4c4c4]">
          <span class="ml-[2px] mr-[6px] h-6 border-l-2 border-dotted border-[#b0b0b0]"></span>
          <span class="flex h-[19px] w-14 border border-[#d8d8d8]"><select disabled aria-label="偏移方式" class="min-w-0 flex-1 appearance-none pl-px"><option>不偏移</option></select><span class="flex w-3 items-center justify-center border border-[#aaa]"><svg class="h-1 w-[7px]"><use href="#dn"/></svg></span></span>
          <span class="mx-1 h-5 w-px bg-[#999]"></span>
          <label class="flex items-center gap-[5px]">X=<input disabled value="0" class="h-[19px] w-10 border border-[#ddd] pr-px text-right"></label>
          <span class="mx-[3px] flex h-[19px] w-[12px] justify-center border border-[#aaa] pt-1"><svg class="h-1 w-[7px] rotate-180"><use href="#dn"/></svg></span>
          <span class="mr-[6px]">mm</span>
          <label class="flex items-center gap-[5px]">Y=<input disabled value="0" class="h-[19px] w-9 border border-[#ddd] pr-px text-right"></label>
          <span class="mx-[3px] flex h-[19px] w-[12px] justify-center border border-[#aaa] pt-1"><svg class="h-1 w-[7px] rotate-180"><use href="#dn"/></svg></span>
          <span>mm</span>
          <span class="mx-1 h-5 w-px bg-[#999]"></span>
          <label class="flex items-center gap-[7px] text-black"><input type="checkbox" class="size-[13px] appearance-none border border-[#8e8f8f] bg-[#f4f4f4] inset-ring-2 inset-ring-[#ddd]">旋转</label>
          <input disabled aria-label="旋转角度" value="0.000" class="ml-1.5 h-[19px] w-[50px] border border-[#ddd] pr-px text-right">
          <span class="mr-1.5 ml-px flex h-[19px] w-[12px] justify-center border border-[#aaa] pt-1"><svg class="h-1 w-[7px] rotate-180"><use href="#dn"/></svg></span>
          <span class="mr-0.5">°</span>
        </div>
        <div class="ml-[65px] flex h-full items-center border-r border-[#c4c4c4] text-black [&_button]:flex [&_button]:h-[23px] [&_button]:items-center [&_button]:gap-1 [&_button]:px-[3px]">
          <span class="mr-[5px] h-6 border-l-2 border-dotted border-[#b0b0b0]"></span>
          <button><svg class="size-4"><use href="#ortho"/></svg>正交</button>
          <button class="mr-px"><svg class="size-4"><use href="#cross"/></svg>交点</button>
          <button class="rounded-xs border border-[#666] bg-[#e2e2e2]"><svg class="size-4"><use href="#perp"/></svg>垂点</button>
          <button class="rounded-xs border border-[#666] bg-[#e2e2e2]"><svg class="size-4"><use href="#mid"/></svg>中点</button>
          <button><svg class="size-4"><use href="#vertex"/></svg>顶点</button>
          <button><svg class="size-4"><use href="#coord"/></svg>坐标</button>
        </div>
      </div>
    </footer>
  </div>
</div>

<!-- Quantity dialog window -->
<section role="dialog" aria-label="查看构件图元工程量" class="absolute top-[118px] right-0 bottom-[43px] left-[716px] flex flex-col rounded-l-md border border-r-0 border-[#8b9096] bg-[#0c0f12] pb-[5px] pl-[5px]">
  <div class="-ml-[5px] flex h-[28px] shrink-0 items-center overflow-hidden rounded-tl-md bg-linear-to-b from-[#e9fbfd] via-[#d6f2f8] to-[#bcdce8] pl-[6px]">
    <svg class="mr-[5px] size-4"><use href="#logo"/></svg>
    <h1>查看构件图元工程量</h1>
    <div class="ml-[22px] flex items-center gap-4 opacity-50 blur-[3px]" aria-hidden="true">
      <span class="h-2 w-2 bg-[#7ab4e8]"></span><span class="-ml-3 h-2.5 w-[42px] bg-[#64808c]"></span><span class="ml-3 h-2.5 w-[86px] bg-[#4c6470]"></span><span class="h-2 w-2 bg-[#5aa8e8]"></span><span class="-ml-1 h-2.5 w-[72px] bg-[#64808c]"></span><span class="-ml-2 h-2 w-2 bg-[#8cc4e8]"></span><span class="-ml-1 h-2.5 w-[80px] bg-[#4c6470]"></span>
    </div>
  </div>
  <div class="flex min-h-0 flex-1 flex-col border border-r-0 border-[#707478] bg-[#f0f0f0]">
    <div role="tablist" class="flex h-5 shrink-0 items-end border-b border-[#8a8e94]">
      <button role="tab" aria-selected="true" class="-mb-px h-5 border border-b-0 border-[#c0c0c0] bg-white px-[7px]">构件工程量</button>
      <button role="tab" aria-selected="false" class="h-[18px] border border-b-0 border-[#8a8e94] bg-linear-to-b from-[#f2f2f2] to-[#d2d2d2] px-[3px]">做法工程量</button>
    </div>
    <div class="flex min-h-0 flex-1 flex-col border-b-4 border-double border-[#8a8e94] bg-white pl-[6px]">
      <div class="flex h-[22px] shrink-0 items-center pt-[3px]">
        <label class="flex items-center gap-[8px]"><input type="radio" name="q" class="-ml-px size-3 appearance-none rounded-full border border-[#8e8f8f] bg-[#eee] inset-ring-1 inset-ring-white">清单工程量</label>
        <label class="flex items-center gap-[8px]"><input type="radio" name="q" checked class="size-3 appearance-none rounded-full border border-[#4c5c6c] bg-[#1a5a8a] inset-ring-2 inset-ring-[#d8ecf8]">定额工程量</label>
        <span class="mx-1 ml-[9px] h-3 w-px bg-[#999]"></span>
        <label class="relative flex items-center gap-[8px]"><input type="checkbox" checked class="size-[13px] appearance-none border border-[#8e8f8f] bg-[#f4f4f4] inset-ring-1 inset-ring-white"><svg class="absolute left-[2px] size-[9px]"><path d="M1.500 4l2 3.500L8 1" fill="none" stroke="#304c94" stroke-width="1.800"/></svg>显示房间、组合构件量</label>
        <span class="mx-1 ml-2 h-3 w-px bg-[#999]"></span>
        <label class="relative flex items-center gap-[7px] text-[#9a9a9a]"><input type="checkbox" checked disabled class="size-[13px] appearance-none border border-[#b8b8b8] bg-[#fafafa]"><svg class="absolute left-[2px] size-[9px]"><path d="M1.500 4l2 3.500L8 1" fill="none" stroke="#aaa" stroke-width="1.800"/></svg>只显示标准层单层量</label>
      </div>
      <div class="flex min-h-0 flex-1 flex-col overflow-hidden border border-r-0 border-[#9a9ea4] pt-px pl-px">
        <table class="w-[695px] table-fixed border-collapse text-right [&_i]:font-['Liberation_Mono',monospace] [&_i]:text-[10px] [&_i]:leading-none [&_i]:not-italic [&_td]:h-[19px] [&_td]:border-r [&_td]:border-b [&_td]:border-[#101070] [&_td]:p-0 [&_td]:pr-[3px] [&_td]:font-['Liberation_Sans',sans-serif] [&_td]:leading-4 [&_th]:h-[19px] [&_th]:border-r [&_th]:border-b [&_th]:border-[#c2cad4] [&_th]:bg-[#779fcd] [&_th]:p-0 [&_th]:text-center [&_th]:leading-4 [&_th]:font-normal">
          <colgroup><col class="w-[35px]"><col class="w-[77px]"><col class="w-[77px]"><col class="w-[77px]"><col class="w-[101px]"><col class="w-[149px]"><col class="w-[77px]"><col class="w-[102px]"></colgroup>
          <thead class="text-white">
            <tr><th></th><th colspan="7">工程量名称</th></tr>
            <tr><th></th><th>模板面积<i>(m2)</i></th><th>斜面面积<i>(m2)</i></th><th>底部面积<i>(m2)</i></th><th>水平投影面积<i>(m2)</i></th><th>外墙外侧筏板平面面积<i>(m2)</i></th><th>模板体积<i>(m3)</i></th><th class="[text-align:left]">直面面积<i>(m2)</i></th></tr>
          </thead>
          <tbody>
            <tr><th scope="row" class="text-[#2a1a70]">1</th><td>9</td><td>0</td><td>18</td><td>18</td><td>0</td><td>9</td><td></td></tr>
            <tr class="bg-[#7affff]"><th scope="row" class="text-[#202850]">2</th><td>9</td><td>0</td><td>18</td><td>18</td><td>0</td><td>9</td><td></td></tr>
          </tbody>
        </table>
        <div class="mt-auto flex h-4 shrink-0 items-center bg-[#ececec]">
          <svg class="ml-[5px] h-[7px] w-1"><path d="M4 0v7L0 3.500z" fill="#333"/></svg>
          <div class="mr-[13px] ml-auto flex h-[15px] w-[392px] items-center justify-center gap-px border border-[#979797] bg-linear-to-b from-[#f4f4f4] from-45% to-[#c8c8c8]">
            <span class="mx-px h-[7px] w-px bg-[#555]"></span><span class="mx-px h-[7px] w-px bg-[#555]"></span><span class="mx-px h-[7px] w-px bg-[#555]"></span>
          </div>
        </div>
      </div>
    </div>
    <div class="flex h-[42px] shrink-0 items-start gap-[20px] pt-[8px] pl-[6px] [&_button]:h-[22px] [&_button]:rounded-[3px] [&_button]:border [&_button]:border-[#707070] [&_button]:bg-linear-to-b [&_button]:from-[#f4f4f4] [&_button]:from-45% [&_button]:to-[#cfcfcf] [&_button]:px-2 [&_span]:font-['Liberation_Sans',sans-serif] [&_span]:text-[11px]">
      <button>设置分类及工程量(S)</button>
      <button>导出到<span>Excel</span></button>
      <button>导出到已有<span>Excel</span></button>
    </div>
  </div>
</section>

<!-- Red annotation rings -->
<svg class="pointer-events-none absolute inset-0 size-full" fill="none" stroke="#dc1010" stroke-width="3" aria-hidden="true">
  <ellipse cx="421.500" cy="38" rx="69" ry="22.500"/>
  <ellipse cx="91.500" cy="366.500" rx="69" ry="17"/>
  <ellipse cx="865" cy="162" rx="80" ry="33.500"/>
  <ellipse cx="1040" cy="238.500" rx="303" ry="62.500"/>
</svg>
</body>
</html>
